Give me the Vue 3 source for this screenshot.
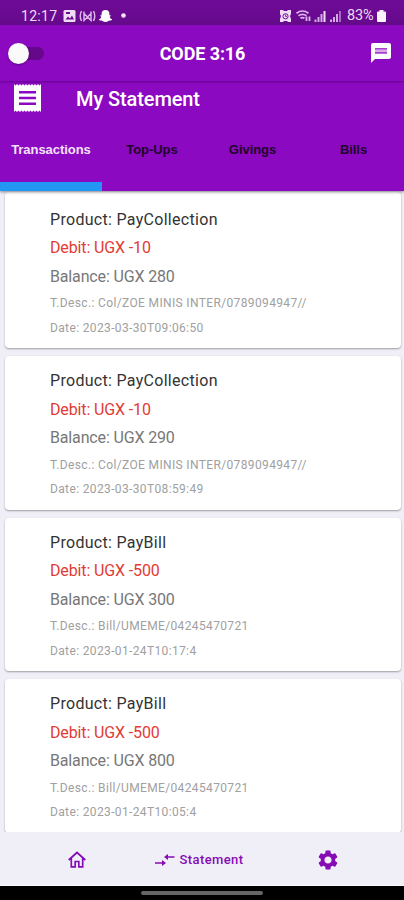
<script setup>
import { ref } from 'vue'

const tabs = ['Transactions', 'Top-Ups', 'Givings', 'Bills']
const active = ref(0)
const items = [
  { product: 'PayCollection', debit: '-10', balance: '280', desc: 'Col/ZOE MINIS INTER/0789094947//', date: '2023-03-30T09:06:50' },
  { product: 'PayCollection', debit: '-10', balance: '290', desc: 'Col/ZOE MINIS INTER/0789094947//', date: '2023-03-30T08:59:49' },
  { product: 'PayBill', debit: '-500', balance: '300', desc: 'Bill/UMEME/04245470721', date: '2023-01-24T10:17:4' },
  { product: 'PayBill', debit: '-500', balance: '800', desc: 'Bill/UMEME/04245470721', date: '2023-01-24T10:05:4' },
]
</script>

<template>
  <div class="screen">
    <div class="status">
      <span class="clock">12:17</span>
      <svg class="left-icons" viewBox="0 0 66 14" width="66" height="14">
        <rect x="0.5" y="1" width="12" height="12" rx="1.5" fill="#f1dcf7" />
        <path d="M2.5 10.5l2.5-3 2 2 2-3 2 4z" fill="#6a0a90" />
        <rect x="3" y="3" width="4" height="2" fill="#6a0a90" />
        <g fill="none" stroke="#dcb5ea" stroke-width="1.5">
          <path d="M18.500 2q-2.500 5 0 10M30.500 2q2.500 5 0 10M21 2.500v9l7-7M28 2.500v9l-7-7M21 11.500l3.500-3.500 3.500 3.500" />
        </g>
        <path d="M42.500 1c2.600 0 3.900 1.600 3.900 3.600v1.600l1.600.2-1.300 1.600c.5 1.300 1.300 2 2.500 2.400-.6 1-1.600 1-2.500 1.100-1 .2-2 1.500-4.200 1.500s-3.200-1.300-4.200-1.500c-.9-.1-1.900-.1-2.500-1.100 1.200-.4 2-1.100 2.500-2.400l-1.300-1.600 1.600-.2V4.600C38.600 2.600 39.900 1 42.500 1z" fill="#fff" />
        <circle cx="60.500" cy="6.500" r="2.300" fill="#f6e8fa" />
      </svg>
      <svg class="right-icons" viewBox="0 0 64 14" width="64" height="14">
        <path d="M1 1h3l1 1h3l1-1h3v4l-1 2 1 3v3H9l-1-1H5l-1 1H1v-3l1-3-1-2z" fill="#f1dcf7" />
        <circle cx="6.500" cy="7.300" r="2.600" fill="none" stroke="#6a0a90" />
        <path d="M6.500 5.500v2h1.500" fill="none" stroke="#6a0a90" stroke-width=".8" />
        <g fill="none" stroke="#dcb5ea" stroke-width="1.700">
          <path d="M17.500 4.200q6-4.400 12 0M19.500 6.700q4-2.800 8 0M21.500 9.300q2-1.500 4 0" />
          <path d="M27.500 7.500v4.500M30.500 12V7.500" stroke-width="1.800" />
        </g>
        <g fill="#d5a9e5">
          <path d="M35.500 10.500h2V13h-2zM38.500 8h2v5h-2zM41.500 5h2v8h-2z" />
          <path d="M44.500 2h2v11h-2z" fill="#f1dcf7" />
          <path d="M51 10.500h2V13h-2zM54 8h2v5h-2zM57 5h2v8h-2z" />
          <path d="M60 2h2v11h-2z" opacity=".6" />
        </g>
      </svg>
      <span class="percent">83%</span>
      <svg class="battery" viewBox="0 0 9 12" width="9" height="12">
        <path d="M2.500 0h4v1.500H8q1 0 1 1V11q0 1-1 1H1q-1 0-1-1V2.500q0-1 1-1h1.500z" fill="#fbf2fd" />
      </svg>
    </div>

    <header class="appbar">
      <div class="switch"><i class="track"></i><i class="thumb"></i></div>
      <h1>CODE 3:16</h1>
      <svg class="chat" viewBox="2 2 20 20" width="20" height="20">
        <path fill="#fff" d="M20 2H4c-1.100 0-1.990.9-1.990 2L2 22l4-4h14c1.100 0 2-.9 2-2V4c0-1.100-.9-2-2-2z" />
        <path fill="#a63fce" d="M6 7h12v1.800H6zM6 11h12v1.800H6z" />
        <path fill="#d9abe9" d="M6 8.800h12V11H6z" />
      </svg>
    </header>

    <section class="heading">
      <div class="title-row">
        <svg viewBox="0 0 27 28" width="27" height="28">
          <path fill="#fff" d="M0 0l1.500 1.500L3 0l1.500 1.500L6 0l1.500 1.500L9 0l1.500 1.500L12 0l1.500 1.500L15 0l1.500 1.500L18 0l1.500 1.500L21 0l1.500 1.500L24 0l1.500 1.500L27 0v28l-1.500-1.500L24 28l-1.500-1.500L21 28l-1.500-1.500L18 28l-1.500-1.500L15 28l-1.500-1.500L12 28l-1.500-1.500L9 28l-1.500-1.500L6 28l-1.500-1.500L3 28l-1.500-1.500L0 28z" />
          <path fill="#8b09c0" d="M5 7h17v2.400H5zM5 12.800h17v2.400H5zM5 18.600h17V21H5z" />
        </svg>
        <h2>My Statement</h2>
      </div>
      <nav class="tabs">
        <button v-for="(t, i) in tabs" :key="t" :class="{ on: i === active }" @click="active = i">{{ t }}</button>
      </nav>
    </section>

    <main class="list">
      <article v-for="item in items" :key="item.date" class="card">
        <p class="product">Product: {{ item.product }}</p>
        <p class="debit">Debit: UGX {{ item.debit }}</p>
        <p class="balance">Balance: UGX {{ item.balance }}</p>
        <p class="small desc">T.Desc.: {{ item.desc }}</p>
        <p class="small">Date: {{ item.date }}</p>
      </article>
    </main>

    <footer class="bottom">
      <svg class="home" viewBox="0 0 18 17" width="18" height="17">
        <path fill="none" stroke="#850bb5" stroke-width="1.700" d="M.7 9L9 1.500 17.300 9M3.300 7.500v8.300h3.900v-5.300h3.600v5.300h3.900V7.500" />
      </svg>
      <div class="current">
        <svg viewBox="0 0 20 14" width="20" height="14">
          <path fill="#850bb5" d="M0 9.300h7V7l4 3-4 3v-2.300H0zM19.500 4.700H13V7L9 4l4-3v2.300h6.500z" />
        </svg>
        <span>Statement</span>
      </div>
      <svg class="gear" viewBox="2 2 20 20" width="20" height="20">
        <path fill="#850bb5" d="M19.140 12.940c.04-.3.060-.61.060-.94 0-.32-.02-.64-.07-.94l2.030-1.580c.18-.14.230-.41.120-.61l-1.920-3.320c-.12-.22-.37-.29-.59-.22l-2.390.96c-.5-.38-1.030-.7-1.620-.94l-.36-2.540c-.04-.24-.24-.41-.48-.41h-3.840c-.24 0-.43.17-.47.41l-.36 2.540c-.59.24-1.130.57-1.620.94l-2.390-.96c-.22-.08-.47 0-.59.220L2.740 8.870c-.12.21-.08.470.12.610l2.030 1.580c-.05.3-.09.63-.09.94s.02.64.07.94l-2.030 1.580c-.18.14-.23.41-.12.610l1.920 3.320c.12.22.37.29.59.22l2.390-.96c.5.38 1.030.7 1.620.94l.36 2.540c.05.24.24.41.48.41h3.840c.24 0 .44-.17.47-.41l.36-2.540c.59-.24 1.130-.56 1.620-.94l2.390.96c.22.08.47 0 .59-.22l1.920-3.320c.12-.22.07-.47-.12-.61l-2.010-1.580zM12 15.600c-1.980 0-3.600-1.620-3.600-3.600s1.620-3.600 3.600-3.600 3.600 1.620 3.600 3.600-1.620 3.600-3.600 3.600z" />
      </svg>
    </footer>
    <div class="gesture"><i></i></div>
  </div>
</template>

<style>
body { background: #f0eff8; }
</style>

<style scoped>
.screen { width: 404px; height: 900px; display: flex; flex-direction: column; overflow: hidden; background: #f0eff8; font-family: Roboto, sans-serif; }
h1, h2, p { margin: 0; }
.status { flex: 0 0 25px; box-sizing: border-box; display: flex; align-items: center; padding: 6px 18px 0 21px; background: linear-gradient(#6f0b97, #650a8b); color: #efdcf6; }
.clock { width: 36px; font-size: 14px; letter-spacing: .3px; line-height: 18px; white-space: nowrap; }
.left-icons { margin-left: 6px; }
.right-icons { margin-left: auto; }
.percent { margin-left: 4px; width: 28px; font-size: 14.500px; line-height: 18px; padding-top: 1px; letter-spacing: -.2px; white-space: nowrap; }
.battery { margin-left: 2px; }
.appbar { flex: 0 0 56px; display: grid; grid-template-columns: 60px 1fr 60px; align-items: center; background: #8b09c0; position: relative; z-index: 2; box-shadow: 0 1px 2px rgba(60, 0, 90, .5); }
.switch { display: flex; align-items: center; padding-left: 8px; }
.thumb { order: -1; width: 21px; height: 21px; border-radius: 50%; background: #fafafa; z-index: 1; box-shadow: 0 1px 2px rgba(0, 0, 0, .3); }
.track { width: 24px; height: 13px; margin-left: -9px; border-radius: 7px; background: #650889; }
h1 { color: #fff; text-align: center; font-size: 18px; font-weight: 700; line-height: 24px; letter-spacing: -.1px; padding: 1px 0 0 1px; }
.chat { justify-self: end; margin-right: 13px; }
.heading { flex: 0 0 109.500px; display: flex; flex-direction: column; background: #8b09c0; position: relative; z-index: 1; box-shadow: 0 1px 3px rgba(0, 0, 0, .45); }
.title-row { display: flex; align-items: center; box-sizing: border-box; height: 36px; padding: 0 0 2px 14px; gap: 35px; }
h2 { color: #fff; font-size: 20px; font-weight: 500; line-height: 24px; letter-spacing: -.1px; padding-top: 1px; }
.tabs { flex: 1; display: grid; grid-template-columns: 102px 100px 101px 101px; }
.tabs button { border: 0; background: none; padding: 1px 0 0; font: 700 13px/20px "Liberation Sans", sans-serif; letter-spacing: -.05px; color: #1d0529; border-bottom: 9px solid transparent; }
.tabs button.on { color: #f5e2fb; border-bottom-color: #2196f3; }
.list { flex: 1; min-height: 0; padding: 1px 3.500px 0 5px; display: flex; flex-direction: column; gap: 8px; overflow: hidden; }
.card { flex: 0 0 153.500px; box-sizing: border-box; padding: 11px 0 0 45px; background: #fff; border-radius: 4px; box-shadow: 0 1px 2px rgba(0, 0, 0, .35); white-space: nowrap; }
.card:first-child { flex-basis: 156.500px; padding-top: 14px; }
.product, .debit, .balance { font-size: 16px; line-height: 28.600px; }
.product { color: #333; letter-spacing: .3px; }
.debit { color: #e23b34; letter-spacing: -.13px; }
.balance { color: #777; letter-spacing: -.15px; }
.small { font-size: 12px; line-height: 24.500px; color: #a0a0a0; letter-spacing: .36px; }
.bottom { flex: 0 0 54px; box-sizing: border-box; display: flex; align-items: center; padding-top: 2px; background: #f0eff8; border-bottom: 1px solid #fafafd; position: relative; }
.home { margin-left: 67.500px; }
.current { margin-left: 69.500px; display: flex; align-items: center; gap: 4.500px; font-size: 13px; font-weight: 500; color: #850bb5; letter-spacing: .4px; }
.gear { margin-left: auto; margin-right: 66px; }
.gesture { flex: 0 0 14px; display: flex; align-items: center; justify-content: center; background: #000; }
.gesture i { width: 122px; height: 4px; border-radius: 2px; background: #666; }
</style>
